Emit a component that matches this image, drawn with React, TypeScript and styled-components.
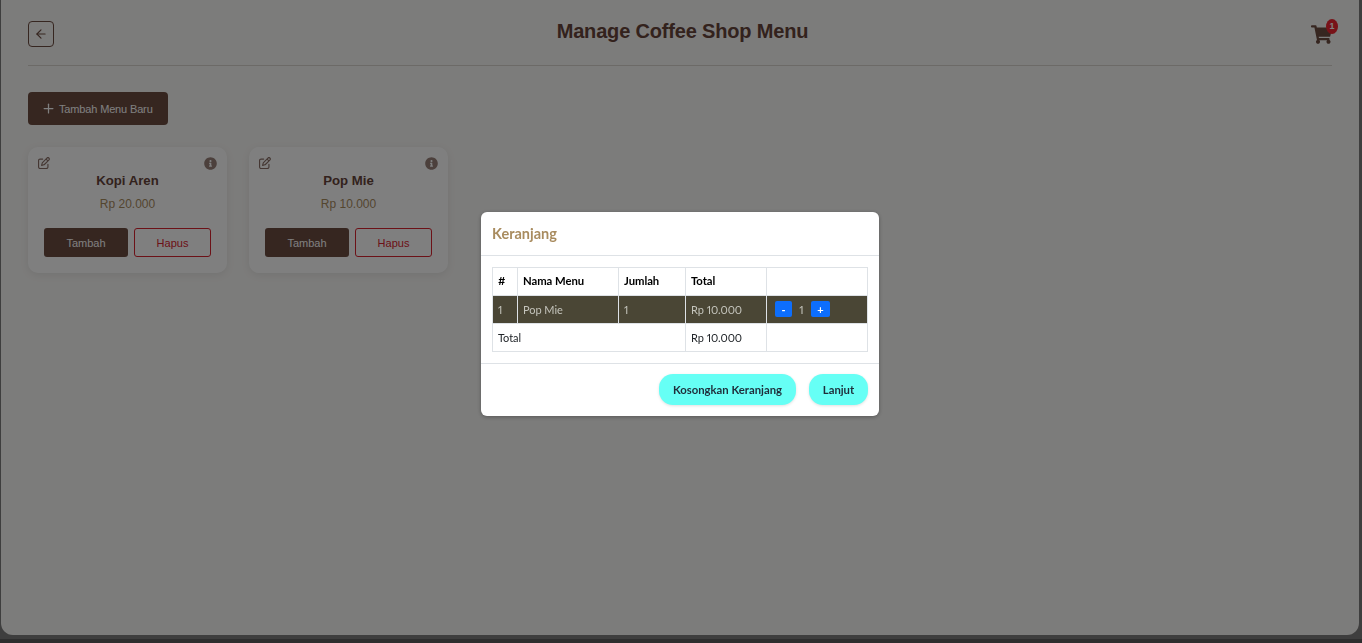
import React from 'react';
import styled, { createGlobalStyle } from 'styled-components';
import { ArrowLeft, Plus } from 'lucide-react';
import { FaInfoCircle, FaShoppingCart } from 'react-icons/fa';
import { FaRegPenToSquare } from 'react-icons/fa6';

const GlobalStyle = createGlobalStyle`
  html, body {
    margin: 0;
    height: 100%;
    overflow: hidden;
  }
  body {
    background: linear-gradient(#7c7c7c 639px, #5c5c5c 639px);
  }
  * {
    box-sizing: border-box;
  }
`;

const Page = styled.div`
  height: 635px;
  margin: 0 3px 0 1px;
  padding: 21px 27px 0 27px;
  background: #f9f8f6;
  border-radius: 0 0 12px 12px;
  font-family: 'Liberation Sans', Arial, sans-serif;
`;

const Header = styled.header`
  display: flex;
  align-items: center;
  justify-content: space-between;
  height: 45px;
  padding-bottom: 18px;
  border-bottom: 1px solid #d9d4cf;
`;

const BackButton = styled.button`
  display: flex;
  align-items: center;
  justify-content: center;
  width: 26px;
  height: 26px;
  padding: 0;
  background: transparent;
  border: 1px solid #6d4c41;
  border-radius: 4px;
  color: #6d4c41;
`;

const Title = styled.h1`
  margin: 0;
  font-size: 20px;
  font-weight: 700;
  line-height: 20px;
  letter-spacing: -0.17px;
  color: #66443a;
  transform: translateY(-3px);
`;

const CartWrap = styled.div`
  position: relative;
  width: 21px;
  height: 20px;
  color: #6d4c41;
`;

const CartBadge = styled.span`
  position: absolute;
  top: -5px;
  left: 15px;
  width: 12px;
  height: 15px;
  border-radius: 50%;
  background: #f02530;
  color: #fff;
  font-size: 9px;
  font-weight: 700;
  line-height: 15px;
  text-align: center;
`;

const AddButton = styled.button`
  display: flex;
  align-items: center;
  gap: 3px;
  width: 140px;
  height: 33px;
  margin: 26px 0 22px;
  padding: 0 0 0 13px;
  background: #6d4c41;
  border: none;
  border-radius: 4px;
  color: #fff;
  font-family: inherit;
  font-size: 11px;
  letter-spacing: -0.15px;
`;

const CardRow = styled.div`
  display: flex;
  gap: 22px;
`;

const Card = styled.article`
  display: flex;
  flex-direction: column;
  align-items: center;
  width: 199px;
  height: 126px;
  padding: 10px 16px 0;
  background: #fff;
  border-radius: 10px;
  box-shadow: 0 2px 8px rgba(0, 0, 0, 0.08);
`;

const CardIcons = styled.div`
  display: flex;
  justify-content: space-between;
  align-items: flex-start;
  align-self: stretch;
  height: 13px;
  margin: 0 -6px;
  color: #6d4c41;
  font-size: 13px;

  svg:first-child {
    font-size: 12px;
    opacity: 0.8;
  }
  svg:last-child {
    opacity: 0.7;
  }
`;

const CardName = styled.h3`
  margin: 1px 0 0;
  font-size: 13.2px;
  font-weight: 700;
  line-height: 20px;
  color: #66443a;
`;

const CardPrice = styled.p`
  margin: 5px 0 0;
  font-size: 12px;
  line-height: 16px;
  color: #a98c5f;
`;

const CardActions = styled.div`
  display: flex;
  gap: 6px;
  margin-top: 16px;
  align-self: stretch;
`;

const CardButton = styled.button<{ $variant: 'solid' | 'outline' }>`
  height: 29px;
  width: ${({ $variant }) => ($variant === 'solid' ? '84px' : '77px')};
  padding: 0;
  background: ${({ $variant }) => ($variant === 'solid' ? '#6d4c41' : 'transparent')};
  border: ${({ $variant }) => ($variant === 'solid' ? 'none' : '1px solid #d9232e')};
  border-radius: 3px;
  color: ${({ $variant }) => ($variant === 'solid' ? '#fff' : '#d9232e')};
  font-family: inherit;
  font-size: 11px;
`;

const Overlay = styled.div`
  position: fixed;
  inset: 0;
  background: rgba(0, 0, 0, 0.5);
`;

const Modal = styled.div`
  position: absolute;
  top: 212px;
  left: 481px;
  width: 398px;
  height: 204px;
  background: #fff;
  border-radius: 6px;
  box-shadow: 0 1px 4px rgba(0, 0, 0, 0.3);
  font-family: Lato, 'Noto Sans', sans-serif;
`;

const ModalHeader = styled.div`
  display: flex;
  align-items: center;
  height: 44px;
  padding: 0 11px;
  border-bottom: 1px solid #dee2e6;
`;

const ModalTitle = styled.h5`
  margin: 0;
  font-size: 14.5px;
  font-weight: 700;
  color: #a98c5f;
`;

const ModalBody = styled.div`
  height: 108px;
  padding: 11px 11px 0;
  border-bottom: 1px solid #dee2e6;
`;

const CartTable = styled.table`
  width: 375px;
  border-collapse: collapse;
  table-layout: fixed;
  font-size: 11px;
  font-variant-numeric: proportional-nums;
  letter-spacing: -0.05px;
  color: #212529;
`;

const Th = styled.th<{ $w: number }>`
  width: ${({ $w }) => $w}px;
  height: 28px;
  padding: 0 5px 2px;
  border: 1px solid #dee2e6;
  color: #000;
  font-size: 11.3px;
  font-weight: 700;
  text-align: left;
`;

const Td = styled.td`
  height: 28px;
  padding: 0 5px 1px;
  border: 1px solid #dee2e6;
`;

const DarkRow = styled.tr`
  background: #4a4635;
  color: #c4c4bc;
`;

const Stepper = styled.div`
  display: flex;
  align-items: center;
  padding-left: 3px;
`;

const StepButton = styled.button<{ $wide?: boolean }>`
  width: ${({ $wide }) => ($wide ? '19px' : '17px')};
  height: 16px;
  padding: 0;
  background: #0d6efd;
  border: none;
  border-radius: 2px;
  color: #fff;
  font-family: inherit;
  font-size: 11px;
  font-weight: 700;
  line-height: 18px;
`;

const StepValue = styled.span`
  width: 19px;
  text-align: center;
`;

const ModalFooter = styled.div`
  display: flex;
  justify-content: flex-end;
  align-items: center;
  gap: 13px;
  height: 52px;
  padding: 0 11px 1px;
`;

const PillButton = styled.button<{ $w: number }>`
  width: ${({ $w }) => $w}px;
  height: 31px;
  padding: 0;
  background: #66fff5;
  border: none;
  border-radius: 14px;
  box-shadow: 0 1px 3px rgba(0, 0, 0, 0.12);
  color: #1f2d3a;
  font-family: inherit;
  font-size: 11.3px;
  font-weight: 700;
`;

const menu = [
  { name: 'Kopi Aren', price: 'Rp 20.000' },
  { name: 'Pop Mie', price: 'Rp 10.000' },
];

export default function App() {
  return (
    <>
      <GlobalStyle />
      <Page>
        <Header>
          <BackButton>
            <ArrowLeft size={14} />
          </BackButton>
          <Title>Manage Coffee Shop Menu</Title>
          <CartWrap>
            <FaShoppingCart size={21} />
            <CartBadge>1</CartBadge>
          </CartWrap>
        </Header>
        <AddButton>
          <Plus size={15} />
          Tambah Menu Baru
        </AddButton>
        <CardRow>
          {menu.map((item) => (
            <Card key={item.name}>
              <CardIcons>
                <FaRegPenToSquare />
                <FaInfoCircle />
              </CardIcons>
              <CardName>{item.name}</CardName>
              <CardPrice>{item.price}</CardPrice>
              <CardActions>
                <CardButton $variant="solid">Tambah</CardButton>
                <CardButton $variant="outline">Hapus</CardButton>
              </CardActions>
            </Card>
          ))}
        </CardRow>
      </Page>
      <Overlay>
        <Modal>
          <ModalHeader>
            <ModalTitle>Keranjang</ModalTitle>
          </ModalHeader>
          <ModalBody>
            <CartTable>
              <thead>
                <tr>
                  <Th $w={25}>#</Th>
                  <Th $w={101}>Nama Menu</Th>
                  <Th $w={67}>Jumlah</Th>
                  <Th $w={81}>Total</Th>
                  <Th $w={101} />
                </tr>
              </thead>
              <tbody>
                <DarkRow>
                  <Td>1</Td>
                  <Td>Pop Mie</Td>
                  <Td>1</Td>
                  <Td>Rp 10.000</Td>
                  <Td>
                    <Stepper>
                      <StepButton>-</StepButton>
                      <StepValue>1</StepValue>
                      <StepButton $wide>+</StepButton>
                    </Stepper>
                  </Td>
                </DarkRow>
                <tr>
                  <Td colSpan={3}>Total</Td>
                  <Td>Rp 10.000</Td>
                  <Td />
                </tr>
              </tbody>
            </CartTable>
          </ModalBody>
          <ModalFooter>
            <PillButton $w={137}>Kosongkan Keranjang</PillButton>
            <PillButton $w={59}>Lanjut</PillButton>
          </ModalFooter>
        </Modal>
      </Overlay>
    </>
  );
}
